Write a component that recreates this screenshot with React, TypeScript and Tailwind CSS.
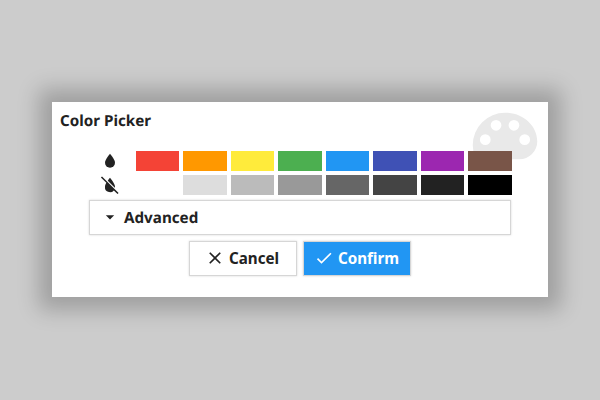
import React from "react";

const colors = ["bg-[#f44336]", "bg-[#ff9800]", "bg-[#ffeb3b]", "bg-[#4caf50]", "bg-[#2196f3]", "bg-[#3f51b5]", "bg-[#9c27b0]", "bg-[#795548]"];
const greys = ["bg-white", "bg-[#dddddd]", "bg-[#bbbbbb]", "bg-[#999999]", "bg-[#666666]", "bg-[#444444]", "bg-[#222222]", "bg-black"];

function Icon({ d, className }: { d: string; className: string }) {
  return (
    <svg viewBox="0 0 24 24" fill="currentColor" className={className}>
      <path fillRule="evenodd" d={d} />
    </svg>
  );
}

const water = "M12,20A6,6 0 0,1 6,14C6,10 12,3.25 12,3.25C12,3.25 18,10 18,14A6,6 0 0,1 12,20Z";
const waterOff =
  "M2.4,1.7L22.3,21.6L21,22.9L16.6,18.5A6,6 0 0,1 6,14C6,12.6 6.7,11 7.6,9.4L1.1,3ZM12,3.25C12,3.25 18,10 18,14C18,14.5 17.9,15 17.8,15.2L9.3,6.8C10.7,4.7 12,3.25 12,3.25Z";
const palette =
  "M17.5,12A1.5,1.5 0 0,1 16,10.5A1.5,1.5 0 0,1 17.5,9A1.5,1.5 0 0,1 19,10.5A1.5,1.5 0 0,1 17.5,12M14.5,8A1.5,1.5 0 0,1 13,6.5A1.5,1.5 0 0,1 14.5,5A1.5,1.5 0 0,1 16,6.5A1.5,1.5 0 0,1 14.5,8M9.5,8A1.5,1.5 0 0,1 8,6.5A1.5,1.5 0 0,1 9.5,5A1.5,1.5 0 0,1 11,6.5A1.5,1.5 0 0,1 9.5,8M6.5,12A1.5,1.5 0 0,1 5,10.5A1.5,1.5 0 0,1 6.5,9A1.5,1.5 0 0,1 8,10.5A1.5,1.5 0 0,1 6.5,12M12,3A9,9 0 0,0 3,12A9,9 0 0,0 12,21A1.5,1.5 0 0,0 13.5,19.5C13.5,19.11 13.35,18.76 13.11,18.5C12.88,18.23 12.73,17.88 12.73,17.5A1.5,1.5 0 0,1 14.23,16H16A5,5 0 0,0 21,11C21,6.58 16.97,3 12,3Z";
const close =
  "M19,6.41L17.59,5L12,10.59L6.41,5L5,6.41L10.59,12L5,17.59L6.41,19L12,13.41L17.59,19L19,17.59L13.41,12L19,6.41Z";
const check = "M21,7L9,19L3.5,13.5L4.91,12.09L9,16.17L19.59,5.59L21,7Z";

function SwatchRow({ icon, swatches }: { icon: string; swatches: string[] }) {
  return (
    <div className="flex h-5 w-[424px] items-center">
      <div className="flex w-[47.8px] shrink-0 pl-3">
        <Icon d={icon} className="size-5 shrink-0" />
      </div>
      <div className="grid h-5 flex-1 grid-cols-8 gap-1">
        {swatches.map((c) => (
          <div key={c} className={c} />
        ))}
      </div>
    </div>
  );
}

const outline = "box-border flex h-[35px] items-center border border-[#d6d6d6] shadow-[0_0_2px_rgba(0,0,0,0.16)]";

export default function App() {
  return (
    <div className="flex h-[400px] w-[600px] flex-col items-center bg-[#cccccc] pt-[102px] font-[family-name:Noto_Sans,sans-serif] text-[15.2px] font-bold text-[#222222] [text-rendering:geometricPrecision]">
      <div className="relative h-[195px] w-[496px] bg-white shadow-[0_0_20px_13px_rgba(0,0,0,0.22)]">
        <div className="absolute top-0 right-0 h-[69px] w-[86px] overflow-hidden text-[#e9e9e9]">
          <Icon d={palette} className="size-[86px]" />
        </div>
        <div className="relative flex flex-col">
          <h1 className="h-[49px] pt-[9px] pl-2 leading-[21px]">Color Picker</h1>
          <div className="ml-9 flex flex-col gap-1">
            <SwatchRow icon={water} swatches={colors} />
            <SwatchRow icon={waterOff} swatches={greys} />
          </div>
          <div className={`${outline} mt-[5px] ml-[37px] w-[422px] pl-2.5`}>
            <Icon d="M7,10L12,15L17,10H7Z" className="mr-1 mb-px size-5" />
            <span className="pt-px">Advanced</span>
          </div>
          <div className="mt-1.5 flex justify-center gap-1.5">
            <button className={`${outline} w-[108px] justify-center gap-1 bg-white pr-0.5`}>
              <Icon d={close} className="mb-px size-5" />
              Cancel
            </button>
            <button className={`${outline} w-[108px] justify-center gap-1 bg-[#2196f3] pr-px text-white`}>
              <Icon d={check} className="mb-px size-5" />
              Confirm
            </button>
          </div>
        </div>
      </div>
    </div>
  );
}
